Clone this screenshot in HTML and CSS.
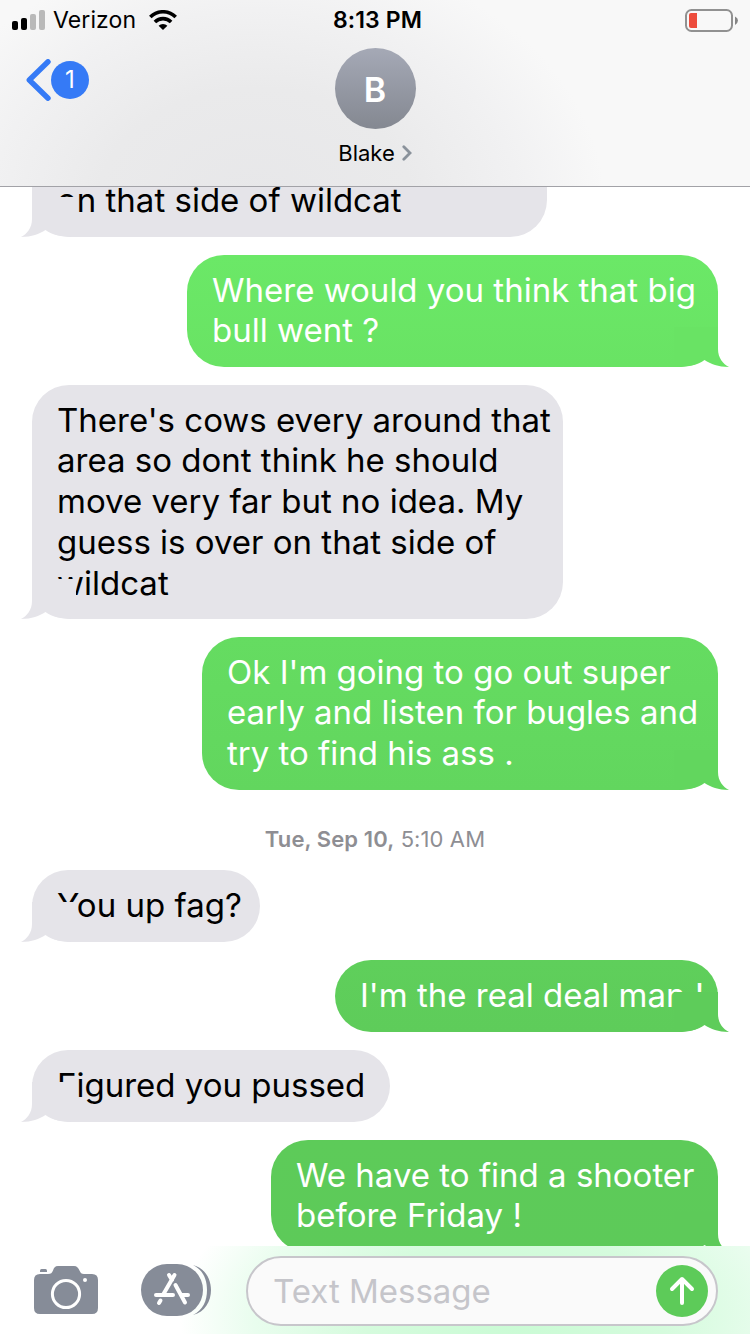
FILE: index.html
```html
<!DOCTYPE html>
<html lang="en">
<head>
<meta charset="utf-8">
<title>Messages</title>
<link rel="stylesheet" href="styles.css">
</head>
<body>
<svg class="defs" width="0" height="0"><defs>
<path id="tail" d="M12 0V22C12 31 7 37 1 40C12 40 19 37 25.500 33C32 38 42 40 56 40V0Z"/>
</defs></svg>
<div class="screen">
<header class="header">
  <div class="status">
    <div class="status-left">
      <svg class="signal" width="34" height="20" viewBox="0 0 34 20"><rect x="0" y="11" width="6" height="9" rx="2"/><rect x="9" y="8" width="6" height="12" rx="2"/><rect class="dim" x="18" y="4" width="6" height="16" rx="2"/><rect class="dim" x="27" y="0" width="6" height="20" rx="2"/></svg>
      <span class="carrier">Verizon</span>
      <svg class="wifi" width="28" height="20" viewBox="0 0 28 20"><g fill="none" stroke="#000" stroke-width="3.600"><path d="M1.300 7A18 18 0 0 1 26.700 7"/><path d="M5.900 12A11.500 11.500 0 0 1 22.100 12"/></g><path d="M14 20L9.600 15.700A6.500 6.500 0 0 1 18.400 15.700Z"/></svg>
    </div>
    <div class="clock">8:13 PM</div>
    <svg class="battery" width="54" height="23" viewBox="0 0 54 23"><rect x="1" y="1" width="46" height="21" rx="5.500" fill="none" stroke="#919191" stroke-width="2"/><path d="M6 4H12V19H6Q4 19 4 17V6Q4 4 6 4Z" fill="#ed4c3c"/><path d="M50 7.500Q53 9 53 11.500T50 16Z" fill="#858585"/></svg>
  </div>
  <div class="nav">
    <div class="back">
      <svg width="25" height="42" viewBox="0 0 25 42"><path d="M22 2.800L3.300 21L22 39.200" fill="none" stroke="#357af6" stroke-width="5.400" stroke-linecap="round" stroke-linejoin="round"/></svg>
      <span class="badge">1</span>
    </div>
    <div class="contact">
      <div class="avatar">B</div>
      <div class="name">Blake<svg width="10" height="16" viewBox="0 0 10 16"><path d="M1.800 1.800L8 8L1.800 14.200" fill="none" stroke="#8a929b" stroke-width="2.800" stroke-linecap="round"/></svg></div>
    </div>
  </div>
</header>
<main class="thread">
  <div class="msg in m0"><span class="l0">on that side of wildcat</span><svg class="tail"><use href="#tail"/></svg></div>
  <div class="msg out m1"><span class="l1">Where would you think that big</span><span class="l2">bull went ?</span><svg class="tail"><use href="#tail"/></svg></div>
  <div class="msg in m2"><span class="l3">There's cows every around that</span><span class="l4">area so dont think he should</span><span class="l5">move very far but no idea. My</span><span class="l6">guess is over on that side of</span><span class="l7">wildcat</span><svg class="tail"><use href="#tail"/></svg></div>
  <div class="msg out m3"><span class="l8">Ok I'm going to go out super</span><span class="l9">early and listen for bugles and</span><span class="l10">try to find his ass .</span><svg class="tail"><use href="#tail"/></svg></div>
  <div class="date"><b>Tue, Sep 10,</b> 5:10 AM</div>
  <div class="msg in m4"><span class="l11">You up fag?</span><svg class="tail"><use href="#tail"/></svg></div>
  <div class="msg out m5"><span class="l12">I'm the real deal man !</span><svg class="tail"><use href="#tail"/></svg></div>
  <div class="msg in m6"><span class="l13">Figured you pussed</span><svg class="tail"><use href="#tail"/></svg></div>
  <div class="msg out m7"><span class="l14">We have to find a shooter</span><span class="l15">before Friday !</span><svg class="tail"><use href="#tail"/></svg></div>
</main>
<footer class="composer">
  <svg class="camera" width="64" height="48" viewBox="0 0 64 48"><path fill="#868c98" d="M6 8H14C17 8 18 7 19 4.500C20 1.500 21 0 24 0H40C43 0 44 1.500 45.500 4.500C46.500 7 47.500 8 50 8H58Q64 8 64 14V42Q64 48 58 48H6Q0 48 0 42V14Q0 8 6 8Z"/><path fill="#868c98" d="M6 6V4.500Q6 3 7.500 3H11.500Q13 3 13 4.500V6Z"/><circle cx="32" cy="28" r="13.600" fill="none" stroke="#fff" stroke-width="3"/><circle cx="51" cy="14" r="2" fill="#fff"/></svg>
  <svg class="apps" width="70" height="52" viewBox="0 0 70 52"><rect width="62" height="52" rx="26" fill="#868c98"/><path fill="#868c98" d="M52 1C64 4 70 15 70 26S64 48 52 51C62 46 66 37 66 26S62 6 52 1Z"/><g fill="none" stroke="#fff" stroke-width="4" stroke-linecap="round"><path d="M33.500 11L22.500 30M28 11L31 16M34.500 21L44 38.500M15 31H32M40 31H47M19.500 36.500L18 39"/></g></svg>
  <div class="field"><span>Text Message</span><svg class="send" width="52" height="52" viewBox="0 0 52 52"><circle cx="26" cy="26" r="26" fill="#5dcb59"/><path d="M26 38V14.500M16 24L26 14L36 24" fill="none" stroke="#fff" stroke-width="4" stroke-linecap="round" stroke-linejoin="round"/></svg></div>
</footer>
</div>
</body>
</html>
```
FILE: styles.css
```css
* { box-sizing: border-box; }
body { margin: 0; font-family: Inter, "Liberation Sans", sans-serif; color: #000; }
.defs { display: block; }
.screen { width: 750px; height: 1334px; display: flex; flex-direction: column; overflow: hidden; background: #fff; }

.header {
  height: 187px;
  flex: none;
  border-bottom: 1px solid #a2a2a7;
  background: radial-gradient(ellipse 350px 260px at 255px 205px, #e7e7e9 0%, #eaeaeb 45%, #f1f1f2 75%, #f8f8f8 100%) #f8f8f8;
}
.status { height: 40px; display: grid; grid-template-columns: 1fr auto 1fr; align-items: center; padding: 0 11px 0 12px; }
.status-left { display: flex; align-items: center; }
.dim { fill: #b9b9b9; }
.carrier { font-size: 23px; line-height: 28px; margin-left: 7px; width: 84px; white-space: nowrap; letter-spacing: 0.1px; }
.wifi { margin-left: 12px; }
.clock { font-size: 23px; line-height: 28px; font-weight: 600; white-space: nowrap; letter-spacing: 0.1px; position: relative; left: 2px; }
.battery { justify-self: end; }
.nav { display: grid; grid-template-columns: 1fr auto 1fr; padding-left: 26px; padding-right: 26px; }
.back { display: flex; align-items: center; height: 42px; margin-top: 19px; }
.badge { width: 38px; height: 38px; border-radius: 50%; background: #357af6; color: #fff; font-size: 24px; line-height: 37px; text-align: center; }
.contact { display: flex; flex-direction: column; align-items: center; padding-top: 8px; }
.avatar { width: 81px; height: 81px; border-radius: 50%; background: linear-gradient(#a5a9b6, #848891); color: #fff; font-size: 34px; line-height: 83px; font-weight: 600; text-align: center; }
.name { display: flex; align-items: center; gap: 7px; font-size: 22px; line-height: 28px; margin-top: 10px; }

.thread { height: 1059px; flex: none; display: flex; flex-direction: column; align-items: flex-start; gap: 18px; padding: 0 32px; overflow: hidden; }
.msg { position: relative; flex: none; border-radius: 37px; padding: 14.6px 25px 0; font-size: 33px; line-height: 40.750px; white-space: nowrap; }
.msg span { display: block; width: max-content; }
.in { background: #e5e4e9; fill: #e5e4e9; }
.out { align-self: flex-end; color: #fff; background: linear-gradient(var(--top), var(--end)); fill: var(--end); }
.tail { position: absolute; bottom: 0; left: -12px; width: 56px; height: 40px; }
.out .tail { left: auto; right: -12px; transform: scaleX(-1); }
.m0 { width: 515px; height: 112px; margin-top: -62px; padding-top: 55px; }
.m1 { width: 531px; height: 112px; --top: #6be867; --end: #69e364; }
.m2 { width: 531px; height: 234px; }
.m3 { width: 516px; height: 153px; --top: #65dc61; --end: #62d65e; }
.m4 { width: 228px; height: 72px; }
.m5 { width: 383px; height: 72px; --top: #5fcf5b; --end: #5ecc5a; }
.m6 { width: 358px; height: 72px; }
.m7 { width: 447px; height: 112px; --top: #5dcb59; --end: #5dca59; }
.date { align-self: center; height: 44px; line-height: 28px; padding-top: 17px; font-size: 22px; color: #8e8e93; white-space: nowrap; letter-spacing: 0.1px; }
.date b { font-weight: 600; }

.composer {
  height: 88px;
  flex: none;
  display: flex;
  align-items: flex-start;
  padding: 10px 32px 0 34px;
  background: radial-gradient(ellipse 335px 180px at 515px 70px, #c9fbd4 0%, #d5fbdd 45%, #e9fdee 78%, #fff 100%) #fff;
}
.camera { margin-top: 10px; }
.apps { margin-top: 8px; margin-left: 43px; }
.field { width: 472px; height: 70px; margin-left: 35px; border: 2px solid #c7c6cb; border-radius: 35px; background: #fafafa; display: flex; align-items: center; justify-content: space-between; padding: 0 8px 0 25px; font-size: 33px; color: #c5c5ca; }
```
